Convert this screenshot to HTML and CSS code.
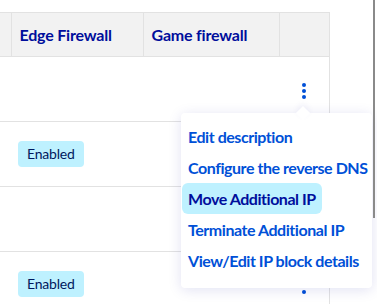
FILE: index.html
```html
<!DOCTYPE html>
<html lang="en">
<head>
  <meta charset="UTF-8">
  <title>Additional IP</title>
  <link rel="stylesheet" href="styles.css">
</head>
<body>
  <div class="page">
    <table class="ip-table">
      <thead>
        <tr>
          <th class="col-cut"></th>
          <th class="col-edge">Edge Firewall</th>
          <th class="col-game">Game firewall</th>
          <th class="col-actions"></th>
        </tr>
      </thead>
      <tbody>
        <tr>
          <td></td>
          <td></td>
          <td></td>
          <td class="actions-cell">
            <span class="dots"><i></i><i></i><i></i></span>
          </td>
        </tr>
        <tr>
          <td></td>
          <td><span class="badge">Enabled</span></td>
          <td></td>
          <td></td>
        </tr>
        <tr>
          <td></td>
          <td></td>
          <td></td>
          <td></td>
        </tr>
        <tr>
          <td></td>
          <td><span class="badge">Enabled</span></td>
          <td></td>
          <td class="actions-cell">
            <span class="dots"><i></i><i></i><i></i></span>
          </td>
        </tr>
      </tbody>
    </table>

    <div class="menu">
      <a class="menu-item">Edit description</a>
      <a class="menu-item">Configure the reverse DNS</a>
      <a class="menu-item active">Move Additional IP</a>
      <a class="menu-item">Terminate Additional IP</a>
      <a class="menu-item">View/Edit IP block details</a>
    </div>

    <div class="scrollbar"></div>
  </div>
</body>
</html>
```

FILE: styles.css
```css
:root {
  --navy: #000e9c;
  --blue: #0050d7;
  --header-bg: #f2f2f2;
  --line: #e2e2e2;
  --badge-bg: #bef1ff;
}

body {
  margin: 0;
  font-family: 'Lato', sans-serif;
  background: #fff;
}

.page {
  position: relative;
  height: 304px;
  overflow: hidden;
  padding-top: 12px;
  box-sizing: border-box;
}

.ip-table {
  border-collapse: collapse;
  table-layout: fixed;
  width: 330px;
}

.ip-table th,
.ip-table td {
  box-sizing: border-box;
}

.ip-table th {
  height: 44px;
  background: var(--header-bg);
  border: 1px solid var(--line);
  color: var(--navy);
  font-size: 16px;
  font-weight: 700;
  text-align: left;
  padding: 0 8px;
  letter-spacing: -0.2px;
}

.ip-table th.col-cut {
  border-left: none;
  width: 11px;
  padding: 0;
}

.col-edge { width: 132px; }
.col-game { width: 136px; }

.ip-table td {
  height: 65px;
  border-bottom: 1px solid var(--line);
  padding: 0 7px;
}

.ip-table td:last-child {
  border-right: 1px solid var(--line);
}

.ip-table td:first-child {
  padding: 0;
}

.actions-cell {
  text-align: center;
}

.dots {
  display: inline-flex;
  flex-direction: column;
  gap: 2px;
  vertical-align: middle;
}

.dots i {
  display: block;
  width: 4px;
  height: 4px;
  border-radius: 50%;
  background: var(--blue);
}

.badge {
  display: inline-block;
  background: var(--badge-bg);
  color: #00185e;
  font-size: 14px;
  line-height: 26px;
  padding: 0 9px;
  border-radius: 4px;
  letter-spacing: -0.2px;
}

.menu {
  position: absolute;
  left: 181px;
  top: 113px;
  width: 191px;
  height: 175px;
  box-sizing: border-box;
  background: #fff;
  border-radius: 4px;
  box-shadow: 0 2px 14px rgba(0, 14, 156, 0.12);
  padding: 8px 1px;
  display: flex;
  flex-direction: column;
}

.menu::before {
  content: "";
  position: absolute;
  top: -5px;
  left: 117px;
  width: 10px;
  height: 10px;
  background: #fff;
  transform: rotate(45deg);
  box-shadow: -2px -2px 6px rgba(0, 14, 156, 0.06);
}

.menu-item {
  position: relative;
  display: block;
  height: 31px;
  line-height: 31px;
  padding: 0 6px;
  color: var(--blue);
  font-size: 16px;
  font-weight: 700;
  letter-spacing: -0.45px;
  white-space: nowrap;
  border-radius: 6px;
}

.menu-item.active {
  background: var(--badge-bg);
  color: var(--navy);
  align-self: flex-start;
}

.scrollbar {
  position: absolute;
  right: 2px;
  top: 0;
  width: 2px;
  height: 218px;
  background: #8a8a8a;
}
```
